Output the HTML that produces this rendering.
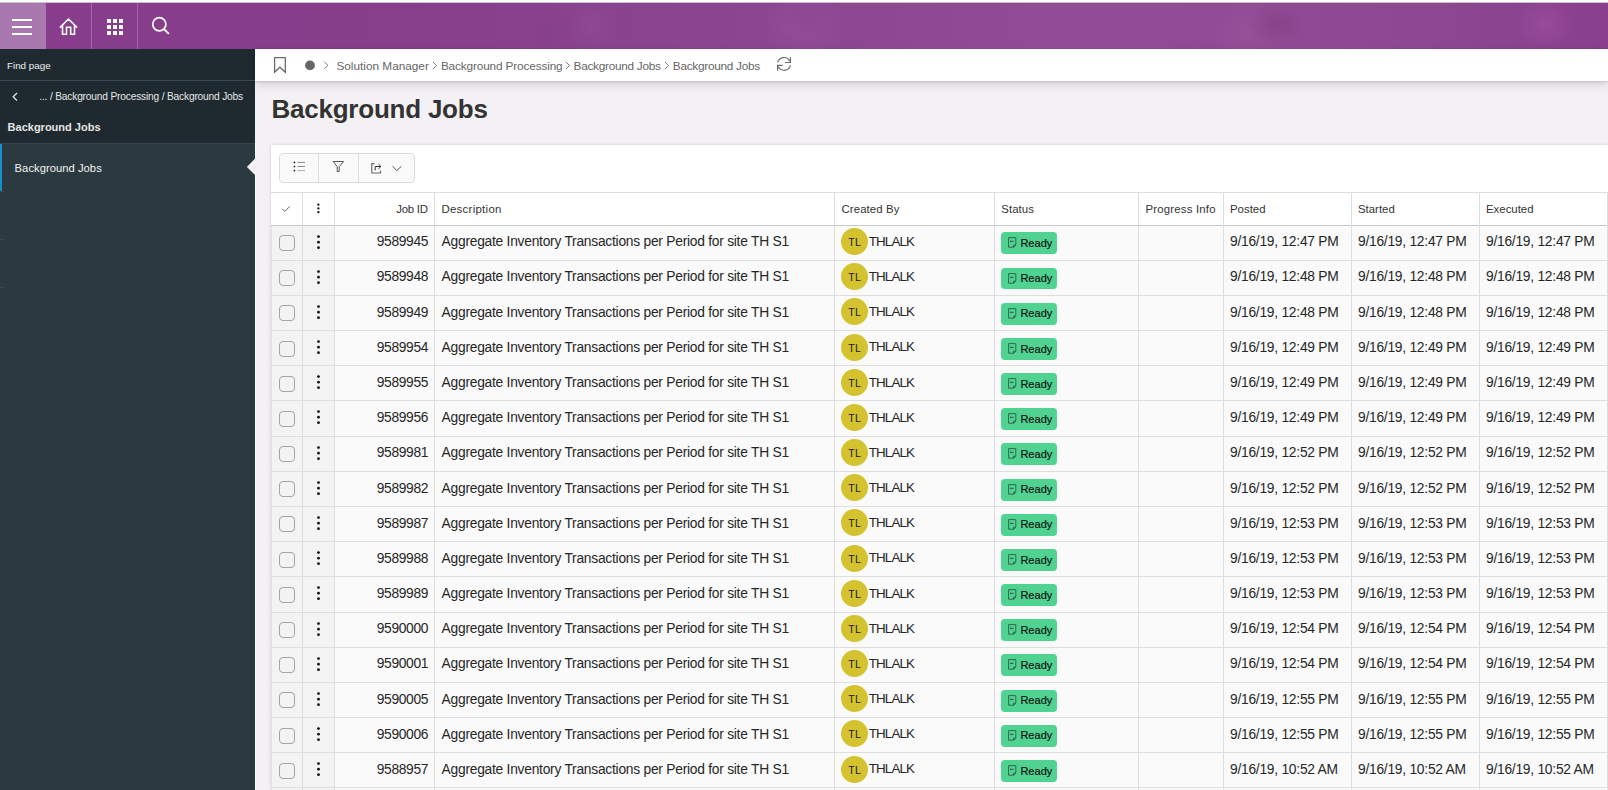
<!DOCTYPE html>
<html><head><meta charset="utf-8">
<style>
*{box-sizing:border-box;margin:0;padding:0}
html,body{width:1608px;height:790px;overflow:hidden;background:#f3f1f4;font-family:"Liberation Sans",sans-serif;color:#333}
.abs{position:absolute}
.t{position:absolute;white-space:nowrap;line-height:1}
#topstrip{left:0;top:0;width:1608px;height:3px;background:#fff;border-bottom:1px solid #c4c4c4}
#hdr{left:0;top:3px;width:1608px;height:46px;background:radial-gradient(ellipse 30px 22px at 1276px 22px,rgba(100,35,100,.22),rgba(100,35,100,0)),radial-gradient(ellipse 30px 26px at 1545px 20px,rgba(175,90,180,.35),rgba(175,90,180,0)),radial-gradient(ellipse 40px 30px at 1250px 28px,rgba(160,100,165,.25),rgba(160,100,165,0)),radial-gradient(ellipse 22px 18px at 808px 18px,rgba(110,40,115,.16),rgba(110,40,115,0)),radial-gradient(ellipse 45px 30px at 805px 22px,rgba(170,95,175,.3),rgba(170,95,175,0)),radial-gradient(ellipse 25px 25px at 592px 22px,rgba(160,95,165,.25),rgba(160,95,165,0)),radial-gradient(ellipse 22px 22px at 547px 28px,rgba(110,45,115,.1),rgba(110,45,115,0)),linear-gradient(90deg,#873d8b 0px,#873e8b 400px,#8b4590 700px,#8d4791 850px,#914c95 1050px,#904b94 1250px,#8c4790 1450px,#893f8e 1608px)}
#hdr .hb{left:0;top:0;width:46px;height:46px;background:#a878ae}
#hdr .dv{top:0;width:1px;height:46px;background:#a36aa8}
#side{left:0;top:49px;width:255px;height:741px;background:#2b3940}
#side .top{left:0;top:0;width:255px;height:94px;background:#1f2a30}
#side .ln{left:0;top:31px;width:255px;height:1px;background:#3b4b53}
#side .act{left:0;top:95px;width:2px;height:47px;background:#1b8cc9}
#bc{left:255px;top:49px;width:1353px;height:32px;background:#fff;box-shadow:0 1px 2px rgba(0,0,0,.12),0 4px 9px rgba(0,0,0,.13)}
#card{left:271px;top:145px;width:1337px;height:645px;background:#fff;box-shadow:0 0 3px rgba(0,0,0,.15)}
#tb{left:279px;top:153px;width:136px;height:30px;border:1px solid #dcdcdc;border-radius:4px;background:#fafafa}
#tb .d{top:0;width:1px;height:28px;background:#dcdcdc}
.row{left:271px;width:1337px;height:35.17px}
.hl{left:271px;width:1337px;height:1px;background:#dedede}
.hrow{left:271px;width:1337px;background:#fff;border-top:1px solid #dedede;border-bottom:1px solid #c9c9c9}
.vl{width:1px;background:#dedede}
.c01{position:absolute;left:0;top:0;width:63.5px;height:100%;background:#f3f3f3}
.cb{position:absolute;left:8px;top:9.5px;width:16px;height:16px;border:1px solid #a4a4a4;border-radius:4px;background:transparent}
.dots{position:absolute;left:43.9px;top:8px}
.dots i,.hdots i{position:absolute;left:0;width:3.3px;height:3.3px;border-radius:50%;background:#111}
.hdots{left:317.3px;top:203.5px}
.hdots i{width:2.3px;height:2.3px}
.av{position:absolute;left:570px;top:2.4px;width:27px;height:27px;border-radius:50%;background:#d4c22e;color:#1a1a1a;font-size:10.6px;text-align:center;line-height:29px;letter-spacing:0.3px;text-indent:0.3px}
.bad{position:absolute;left:730.1px;top:6.8px;width:56px;height:21.9px;border-radius:4px;background:#50d291}
.bad .bi{position:absolute;left:6.6px;top:5px}
</style></head><body>
<div id="topstrip" class="abs"></div>
<div id="hdr" class="abs">
  <div class="abs hb"></div>
  <div class="abs dv" style="left:91px"></div>
  <div class="abs dv" style="left:137px"></div>
  <svg class="abs" style="left:0;top:0" width="200" height="46" viewBox="0 0 200 46">
    <rect x="12" y="16" width="20" height="2" fill="#fff"/>
    <rect x="12" y="23" width="20" height="2" fill="#fff"/>
    <rect x="12" y="30" width="20" height="2" fill="#fff"/>
    <path d="M59.9 24.6L68.5 16L77.1 24.6M62.5 22.3V31.2H66.5V24.2H70.7V31.2H74.5V22.3" fill="none" stroke="#fff" stroke-width="1.55" stroke-linejoin="miter"/>
    <g fill="#fff">
      <rect x="107" y="16" width="4" height="4"/><rect x="113" y="16" width="4" height="4"/><rect x="119" y="16" width="4" height="4"/>
      <rect x="107" y="22" width="4" height="4"/><rect x="113" y="22" width="4" height="4"/><rect x="119" y="22" width="4" height="4"/>
      <rect x="107" y="28" width="4" height="4"/><rect x="113" y="28" width="4" height="4"/><rect x="119" y="28" width="4" height="4"/>
    </g>
    <circle cx="159.3" cy="21.3" r="6.6" fill="none" stroke="#fff" stroke-width="1.7"/>
    <path d="M164 26l4.8 4.8" stroke="#fff" stroke-width="1.8"/>
  </svg>
</div>
<div id="side" class="abs">
  <div class="abs top"></div>
  <div class="abs ln"></div>
  <div class="abs" style="left:0;top:94px;width:255px;height:1px;background:#35454d"></div>
  <div class="abs act"></div>
  <div class="abs" style="left:0;top:142px;width:5px;height:1px;background:#3a4850"></div>
  <div class="abs" style="left:0;top:190px;width:5px;height:1px;background:#3a4850"></div>
  <div class="abs" style="left:0;top:238px;width:5px;height:1px;background:#3a4850"></div>
  <div class="abs" style="left:255px;top:94px;width:1px;height:700px;background:#fdfcfd"></div>
  <svg class="abs" style="left:245px;top:105px" width="12" height="22" viewBox="245 154 12 22"><path d="M257 157.5V176.5H255.6V175L247.1 167L255.6 158.6V157.5Z" fill="#f3f1f4"/><path d="M255.6 158.6L247.6 167L255.6 175" fill="none" stroke="#fff" stroke-width="0.9"/></svg>
  <svg class="abs" style="left:11px;top:43px" width="8" height="10" viewBox="0 0 8 10"><path d="M6 1L2.2 4.8 6 8.6" fill="none" stroke="#e8e8e8" stroke-width="1.3"/></svg>
</div>
<div id="bc" class="abs">
  <svg class="abs" style="left:0;top:0" width="540" height="32" viewBox="0 0 540 32">
    <path d="M19.6 8.6H30.3V23.2L24.9 18.2L19.6 23.2Z" fill="none" stroke="#6b6b6b" stroke-width="1.3"/>
    <circle cx="55" cy="16.4" r="4.9" fill="#666"/>
    <path d="M69.3 12.9l3.6 3.5-3.6 3.5" fill="none" stroke="#777" stroke-width="1"/>
    <path d="M522.6 13.4A6.5 6.5 0 0 1 534.8 12.3" fill="none" stroke="#6b6b6b" stroke-width="1.2"/>
    <path d="M535.4 8.3V13.5H530.1" fill="none" stroke="#6b6b6b" stroke-width="1.2"/>
    <path d="M535.4 16.3A6.5 6.5 0 0 1 523.2 17.5" fill="none" stroke="#6b6b6b" stroke-width="1.2"/>
    <path d="M522.6 21.7V16.3H527.7" fill="none" stroke="#6b6b6b" stroke-width="1.2"/>
  </svg>
</div>
<div id="card" class="abs"></div>
<div id="tb" class="abs">
  <div class="abs d" style="left:38px"></div>
  <div class="abs d" style="left:78px"></div>
  <svg class="abs" style="left:-1px;top:-1px" width="136" height="30" viewBox="279 153 136 30">
    <g fill="#111"><circle cx="294.4" cy="162.4" r="0.85"/><circle cx="294.4" cy="166.5" r="0.85"/><circle cx="294.4" cy="170.6" r="0.85"/></g>
    <g stroke="#888" stroke-width="1"><path d="M297.6 162.4H305"/><path d="M297.6 166.5H305"/><path d="M297.6 170.6H305" stroke="#aaa"/></g>
    <path d="M333.2 161.5H343.6L339.2 166.6V171.4L337.2 171.6V166.6Z" fill="none" stroke="#555" stroke-width="1" stroke-linejoin="round"/>
    <path d="M374.4 163.6H371.8V173H380.5V170.4" fill="none" stroke="#666" stroke-width="1.1"/>
    <path d="M375.2 170.4V166.5H380.8M378.4 164.1L380.9 166.5L378.4 168.9" fill="none" stroke="#333" stroke-width="1"/>
    <path d="M392.5 166.3L396.9 170.6L401.3 166.3" fill="none" stroke="#555" stroke-width="1"/>
  </svg>
</div>
<div class="t" style="left:7.00px;top:60.80px;font-size:9.8px;color:#f0f0f0">Find page</div>
<div class="t" style="left:39.30px;top:92.07px;font-size:10.2px;color:#e6e6e6;letter-spacing:-0.18px">... / Background Processing / Background Jobs</div>
<div class="t" style="left:7.60px;top:122.29px;font-size:11px;color:#e6e6e6;font-weight:700">Background Jobs</div>
<div class="t" style="left:14.60px;top:162.92px;font-size:11.2px;color:#f4f4f4;letter-spacing:0.05px">Background Jobs</div>
<div class="t" style="left:336.40px;top:60.81px;font-size:11.8px;color:#666">Solution Manager</div>
<div class="t" style="left:440.90px;top:60.81px;font-size:11.8px;color:#666;letter-spacing:-0.14px">Background Processing</div>
<div class="t" style="left:573.60px;top:60.81px;font-size:11.8px;color:#666;letter-spacing:-0.27px">Background Jobs</div>
<div class="t" style="left:672.80px;top:60.81px;font-size:11.8px;color:#666;letter-spacing:-0.27px">Background Jobs</div>
<svg class="abs" style="left:431.8px;top:61px" width="6" height="9" viewBox="0 0 6 9"><path d="M1 1l3.6 3.5L1 8" fill="none" stroke="#777" stroke-width="1"/></svg>
<svg class="abs" style="left:565.0px;top:61px" width="6" height="9" viewBox="0 0 6 9"><path d="M1 1l3.6 3.5L1 8" fill="none" stroke="#777" stroke-width="1"/></svg>
<svg class="abs" style="left:663.8px;top:61px" width="6" height="9" viewBox="0 0 6 9"><path d="M1 1l3.6 3.5L1 8" fill="none" stroke="#777" stroke-width="1"/></svg>
<div class="t" style="left:271.40px;top:95.79px;font-size:26px;color:#333;font-weight:700;letter-spacing:-0.22px">Background Jobs</div>
<div class="abs hrow" style="top:192px;height:34px"></div>
<div class="t" style="right:1180.40px;top:204.25px;font-size:11.4px;color:#333;letter-spacing:-0.25px">Job ID</div>
<div class="t" style="left:441.40px;top:204.25px;font-size:11.4px;color:#333;letter-spacing:0.3px">Description</div>
<div class="t" style="left:841.50px;top:204.25px;font-size:11.4px;color:#333;letter-spacing:0.1px">Created By</div>
<div class="t" style="left:1001.20px;top:204.25px;font-size:11.4px;color:#333;letter-spacing:0.1px">Status</div>
<div class="t" style="left:1145.40px;top:204.25px;font-size:11.4px;color:#333;letter-spacing:0.2px">Progress Info</div>
<div class="t" style="left:1230.00px;top:204.25px;font-size:11.4px;color:#333">Posted</div>
<div class="t" style="left:1358.00px;top:204.25px;font-size:11.4px;color:#333">Started</div>
<div class="t" style="left:1486.00px;top:204.25px;font-size:11.4px;color:#333">Executed</div>
<svg class="abs" style="left:281px;top:205px" width="10" height="8" viewBox="0 0 10 8"><path d="M1.3 3.9l2.5 2.5 5-5" fill="none" stroke="#666" stroke-width="1"/></svg>
<svg class="abs" style="left:315px;top:202px" width="7" height="13" viewBox="315 202 7 13"><g fill="#111"><circle cx="318.4" cy="204.7" r="1.15"/><circle cx="318.4" cy="208.45" r="1.15"/><circle cx="318.4" cy="212.2" r="1.15"/></g></svg>
<div class="abs" style="left:271px;top:226px;width:1337px;height:564px;background:#fafafa"></div>
<div class="abs" style="left:271px;top:226px;width:63.5px;height:564px;background:#f3f3f3"></div>
<div class="abs" style="left:271px;top:226px;width:1px;height:564px;background:#e2e2e2"></div>
<div class="abs hl" style="top:259.80px"></div>
<div class="abs hl" style="top:294.97px"></div>
<div class="abs hl" style="top:330.14px"></div>
<div class="abs hl" style="top:365.31px"></div>
<div class="abs hl" style="top:400.48px"></div>
<div class="abs hl" style="top:435.65px"></div>
<div class="abs hl" style="top:470.82px"></div>
<div class="abs hl" style="top:505.99px"></div>
<div class="abs hl" style="top:541.16px"></div>
<div class="abs hl" style="top:576.33px"></div>
<div class="abs hl" style="top:611.50px"></div>
<div class="abs hl" style="top:646.67px"></div>
<div class="abs hl" style="top:681.84px"></div>
<div class="abs hl" style="top:717.01px"></div>
<div class="abs hl" style="top:752.18px"></div>
<div class="abs hl" style="top:787.35px"></div>
<div class="abs row" style="top:225.63px"><div class="cb"></div><svg class="dots" width="7" height="18" viewBox="0 0 7 18"><g fill="#111"><circle cx="3.5" cy="2.6" r="1.4"/><circle cx="3.5" cy="8.15" r="1.4"/><circle cx="3.5" cy="13.7" r="1.4"/></g></svg><div class="t" style="right:1179.80px;top:9.69px;font-size:13.8px;color:#262626;letter-spacing:-0.31px">9589945</div><div class="t" style="left:170.60px;top:9.69px;font-size:13.8px;color:#262626;letter-spacing:-0.25px">Aggregate Inventory Transactions per Period for site TH S1</div><div class="av">TL</div><div class="t" style="left:597.70px;top:9.23px;font-size:13.4px;color:#262626;letter-spacing:-0.85px">THLALK</div><div class="bad"><svg class="bi" width="9" height="11" viewBox="0 0 9 11"><path d="M.6 .6h7.2v7.6l-2 2H.6z" fill="none" stroke="#2d6a52" stroke-width="1"/><path d="M2 4.4h3.4" stroke="#2f6650" stroke-width="1.3"/><path d="M5.5 10.2v-2h2.3" fill="none" stroke="#2f6650" stroke-width="1"/></svg><div class="t" style="left:19.3px;top:5.69px;font-size:11px;color:#141414;letter-spacing:0.02px;-webkit-text-stroke:0.2px #141414">Ready</div></div><div class="t" style="left:959.00px;top:9.69px;font-size:13.8px;color:#262626;letter-spacing:-0.25px">9/16/19, 12:47 PM</div><div class="t" style="left:1087.00px;top:9.69px;font-size:13.8px;color:#262626;letter-spacing:-0.25px">9/16/19, 12:47 PM</div><div class="t" style="left:1215.00px;top:9.69px;font-size:13.8px;color:#262626;letter-spacing:-0.25px">9/16/19, 12:47 PM</div></div>
<div class="abs row" style="top:260.80px"><div class="cb"></div><svg class="dots" width="7" height="18" viewBox="0 0 7 18"><g fill="#111"><circle cx="3.5" cy="2.6" r="1.4"/><circle cx="3.5" cy="8.15" r="1.4"/><circle cx="3.5" cy="13.7" r="1.4"/></g></svg><div class="t" style="right:1179.80px;top:9.69px;font-size:13.8px;color:#262626;letter-spacing:-0.31px">9589948</div><div class="t" style="left:170.60px;top:9.69px;font-size:13.8px;color:#262626;letter-spacing:-0.25px">Aggregate Inventory Transactions per Period for site TH S1</div><div class="av">TL</div><div class="t" style="left:597.70px;top:9.23px;font-size:13.4px;color:#262626;letter-spacing:-0.85px">THLALK</div><div class="bad"><svg class="bi" width="9" height="11" viewBox="0 0 9 11"><path d="M.6 .6h7.2v7.6l-2 2H.6z" fill="none" stroke="#2d6a52" stroke-width="1"/><path d="M2 4.4h3.4" stroke="#2f6650" stroke-width="1.3"/><path d="M5.5 10.2v-2h2.3" fill="none" stroke="#2f6650" stroke-width="1"/></svg><div class="t" style="left:19.3px;top:5.69px;font-size:11px;color:#141414;letter-spacing:0.02px;-webkit-text-stroke:0.2px #141414">Ready</div></div><div class="t" style="left:959.00px;top:9.69px;font-size:13.8px;color:#262626;letter-spacing:-0.25px">9/16/19, 12:48 PM</div><div class="t" style="left:1087.00px;top:9.69px;font-size:13.8px;color:#262626;letter-spacing:-0.25px">9/16/19, 12:48 PM</div><div class="t" style="left:1215.00px;top:9.69px;font-size:13.8px;color:#262626;letter-spacing:-0.25px">9/16/19, 12:48 PM</div></div>
<div class="abs row" style="top:295.97px"><div class="cb"></div><svg class="dots" width="7" height="18" viewBox="0 0 7 18"><g fill="#111"><circle cx="3.5" cy="2.6" r="1.4"/><circle cx="3.5" cy="8.15" r="1.4"/><circle cx="3.5" cy="13.7" r="1.4"/></g></svg><div class="t" style="right:1179.80px;top:9.69px;font-size:13.8px;color:#262626;letter-spacing:-0.31px">9589949</div><div class="t" style="left:170.60px;top:9.69px;font-size:13.8px;color:#262626;letter-spacing:-0.25px">Aggregate Inventory Transactions per Period for site TH S1</div><div class="av">TL</div><div class="t" style="left:597.70px;top:9.23px;font-size:13.4px;color:#262626;letter-spacing:-0.85px">THLALK</div><div class="bad"><svg class="bi" width="9" height="11" viewBox="0 0 9 11"><path d="M.6 .6h7.2v7.6l-2 2H.6z" fill="none" stroke="#2d6a52" stroke-width="1"/><path d="M2 4.4h3.4" stroke="#2f6650" stroke-width="1.3"/><path d="M5.5 10.2v-2h2.3" fill="none" stroke="#2f6650" stroke-width="1"/></svg><div class="t" style="left:19.3px;top:5.69px;font-size:11px;color:#141414;letter-spacing:0.02px;-webkit-text-stroke:0.2px #141414">Ready</div></div><div class="t" style="left:959.00px;top:9.69px;font-size:13.8px;color:#262626;letter-spacing:-0.25px">9/16/19, 12:48 PM</div><div class="t" style="left:1087.00px;top:9.69px;font-size:13.8px;color:#262626;letter-spacing:-0.25px">9/16/19, 12:48 PM</div><div class="t" style="left:1215.00px;top:9.69px;font-size:13.8px;color:#262626;letter-spacing:-0.25px">9/16/19, 12:48 PM</div></div>
<div class="abs row" style="top:331.14px"><div class="cb"></div><svg class="dots" width="7" height="18" viewBox="0 0 7 18"><g fill="#111"><circle cx="3.5" cy="2.6" r="1.4"/><circle cx="3.5" cy="8.15" r="1.4"/><circle cx="3.5" cy="13.7" r="1.4"/></g></svg><div class="t" style="right:1179.80px;top:9.69px;font-size:13.8px;color:#262626;letter-spacing:-0.31px">9589954</div><div class="t" style="left:170.60px;top:9.69px;font-size:13.8px;color:#262626;letter-spacing:-0.25px">Aggregate Inventory Transactions per Period for site TH S1</div><div class="av">TL</div><div class="t" style="left:597.70px;top:9.23px;font-size:13.4px;color:#262626;letter-spacing:-0.85px">THLALK</div><div class="bad"><svg class="bi" width="9" height="11" viewBox="0 0 9 11"><path d="M.6 .6h7.2v7.6l-2 2H.6z" fill="none" stroke="#2d6a52" stroke-width="1"/><path d="M2 4.4h3.4" stroke="#2f6650" stroke-width="1.3"/><path d="M5.5 10.2v-2h2.3" fill="none" stroke="#2f6650" stroke-width="1"/></svg><div class="t" style="left:19.3px;top:5.69px;font-size:11px;color:#141414;letter-spacing:0.02px;-webkit-text-stroke:0.2px #141414">Ready</div></div><div class="t" style="left:959.00px;top:9.69px;font-size:13.8px;color:#262626;letter-spacing:-0.25px">9/16/19, 12:49 PM</div><div class="t" style="left:1087.00px;top:9.69px;font-size:13.8px;color:#262626;letter-spacing:-0.25px">9/16/19, 12:49 PM</div><div class="t" style="left:1215.00px;top:9.69px;font-size:13.8px;color:#262626;letter-spacing:-0.25px">9/16/19, 12:49 PM</div></div>
<div class="abs row" style="top:366.31px"><div class="cb"></div><svg class="dots" width="7" height="18" viewBox="0 0 7 18"><g fill="#111"><circle cx="3.5" cy="2.6" r="1.4"/><circle cx="3.5" cy="8.15" r="1.4"/><circle cx="3.5" cy="13.7" r="1.4"/></g></svg><div class="t" style="right:1179.80px;top:9.69px;font-size:13.8px;color:#262626;letter-spacing:-0.31px">9589955</div><div class="t" style="left:170.60px;top:9.69px;font-size:13.8px;color:#262626;letter-spacing:-0.25px">Aggregate Inventory Transactions per Period for site TH S1</div><div class="av">TL</div><div class="t" style="left:597.70px;top:9.23px;font-size:13.4px;color:#262626;letter-spacing:-0.85px">THLALK</div><div class="bad"><svg class="bi" width="9" height="11" viewBox="0 0 9 11"><path d="M.6 .6h7.2v7.6l-2 2H.6z" fill="none" stroke="#2d6a52" stroke-width="1"/><path d="M2 4.4h3.4" stroke="#2f6650" stroke-width="1.3"/><path d="M5.5 10.2v-2h2.3" fill="none" stroke="#2f6650" stroke-width="1"/></svg><div class="t" style="left:19.3px;top:5.69px;font-size:11px;color:#141414;letter-spacing:0.02px;-webkit-text-stroke:0.2px #141414">Ready</div></div><div class="t" style="left:959.00px;top:9.69px;font-size:13.8px;color:#262626;letter-spacing:-0.25px">9/16/19, 12:49 PM</div><div class="t" style="left:1087.00px;top:9.69px;font-size:13.8px;color:#262626;letter-spacing:-0.25px">9/16/19, 12:49 PM</div><div class="t" style="left:1215.00px;top:9.69px;font-size:13.8px;color:#262626;letter-spacing:-0.25px">9/16/19, 12:49 PM</div></div>
<div class="abs row" style="top:401.48px"><div class="cb"></div><svg class="dots" width="7" height="18" viewBox="0 0 7 18"><g fill="#111"><circle cx="3.5" cy="2.6" r="1.4"/><circle cx="3.5" cy="8.15" r="1.4"/><circle cx="3.5" cy="13.7" r="1.4"/></g></svg><div class="t" style="right:1179.80px;top:9.69px;font-size:13.8px;color:#262626;letter-spacing:-0.31px">9589956</div><div class="t" style="left:170.60px;top:9.69px;font-size:13.8px;color:#262626;letter-spacing:-0.25px">Aggregate Inventory Transactions per Period for site TH S1</div><div class="av">TL</div><div class="t" style="left:597.70px;top:9.23px;font-size:13.4px;color:#262626;letter-spacing:-0.85px">THLALK</div><div class="bad"><svg class="bi" width="9" height="11" viewBox="0 0 9 11"><path d="M.6 .6h7.2v7.6l-2 2H.6z" fill="none" stroke="#2d6a52" stroke-width="1"/><path d="M2 4.4h3.4" stroke="#2f6650" stroke-width="1.3"/><path d="M5.5 10.2v-2h2.3" fill="none" stroke="#2f6650" stroke-width="1"/></svg><div class="t" style="left:19.3px;top:5.69px;font-size:11px;color:#141414;letter-spacing:0.02px;-webkit-text-stroke:0.2px #141414">Ready</div></div><div class="t" style="left:959.00px;top:9.69px;font-size:13.8px;color:#262626;letter-spacing:-0.25px">9/16/19, 12:49 PM</div><div class="t" style="left:1087.00px;top:9.69px;font-size:13.8px;color:#262626;letter-spacing:-0.25px">9/16/19, 12:49 PM</div><div class="t" style="left:1215.00px;top:9.69px;font-size:13.8px;color:#262626;letter-spacing:-0.25px">9/16/19, 12:49 PM</div></div>
<div class="abs row" style="top:436.65px"><div class="cb"></div><svg class="dots" width="7" height="18" viewBox="0 0 7 18"><g fill="#111"><circle cx="3.5" cy="2.6" r="1.4"/><circle cx="3.5" cy="8.15" r="1.4"/><circle cx="3.5" cy="13.7" r="1.4"/></g></svg><div class="t" style="right:1179.80px;top:9.69px;font-size:13.8px;color:#262626;letter-spacing:-0.31px">9589981</div><div class="t" style="left:170.60px;top:9.69px;font-size:13.8px;color:#262626;letter-spacing:-0.25px">Aggregate Inventory Transactions per Period for site TH S1</div><div class="av">TL</div><div class="t" style="left:597.70px;top:9.23px;font-size:13.4px;color:#262626;letter-spacing:-0.85px">THLALK</div><div class="bad"><svg class="bi" width="9" height="11" viewBox="0 0 9 11"><path d="M.6 .6h7.2v7.6l-2 2H.6z" fill="none" stroke="#2d6a52" stroke-width="1"/><path d="M2 4.4h3.4" stroke="#2f6650" stroke-width="1.3"/><path d="M5.5 10.2v-2h2.3" fill="none" stroke="#2f6650" stroke-width="1"/></svg><div class="t" style="left:19.3px;top:5.69px;font-size:11px;color:#141414;letter-spacing:0.02px;-webkit-text-stroke:0.2px #141414">Ready</div></div><div class="t" style="left:959.00px;top:9.69px;font-size:13.8px;color:#262626;letter-spacing:-0.25px">9/16/19, 12:52 PM</div><div class="t" style="left:1087.00px;top:9.69px;font-size:13.8px;color:#262626;letter-spacing:-0.25px">9/16/19, 12:52 PM</div><div class="t" style="left:1215.00px;top:9.69px;font-size:13.8px;color:#262626;letter-spacing:-0.25px">9/16/19, 12:52 PM</div></div>
<div class="abs row" style="top:471.82px"><div class="cb"></div><svg class="dots" width="7" height="18" viewBox="0 0 7 18"><g fill="#111"><circle cx="3.5" cy="2.6" r="1.4"/><circle cx="3.5" cy="8.15" r="1.4"/><circle cx="3.5" cy="13.7" r="1.4"/></g></svg><div class="t" style="right:1179.80px;top:9.69px;font-size:13.8px;color:#262626;letter-spacing:-0.31px">9589982</div><div class="t" style="left:170.60px;top:9.69px;font-size:13.8px;color:#262626;letter-spacing:-0.25px">Aggregate Inventory Transactions per Period for site TH S1</div><div class="av">TL</div><div class="t" style="left:597.70px;top:9.23px;font-size:13.4px;color:#262626;letter-spacing:-0.85px">THLALK</div><div class="bad"><svg class="bi" width="9" height="11" viewBox="0 0 9 11"><path d="M.6 .6h7.2v7.6l-2 2H.6z" fill="none" stroke="#2d6a52" stroke-width="1"/><path d="M2 4.4h3.4" stroke="#2f6650" stroke-width="1.3"/><path d="M5.5 10.2v-2h2.3" fill="none" stroke="#2f6650" stroke-width="1"/></svg><div class="t" style="left:19.3px;top:5.69px;font-size:11px;color:#141414;letter-spacing:0.02px;-webkit-text-stroke:0.2px #141414">Ready</div></div><div class="t" style="left:959.00px;top:9.69px;font-size:13.8px;color:#262626;letter-spacing:-0.25px">9/16/19, 12:52 PM</div><div class="t" style="left:1087.00px;top:9.69px;font-size:13.8px;color:#262626;letter-spacing:-0.25px">9/16/19, 12:52 PM</div><div class="t" style="left:1215.00px;top:9.69px;font-size:13.8px;color:#262626;letter-spacing:-0.25px">9/16/19, 12:52 PM</div></div>
<div class="abs row" style="top:506.99px"><div class="cb"></div><svg class="dots" width="7" height="18" viewBox="0 0 7 18"><g fill="#111"><circle cx="3.5" cy="2.6" r="1.4"/><circle cx="3.5" cy="8.15" r="1.4"/><circle cx="3.5" cy="13.7" r="1.4"/></g></svg><div class="t" style="right:1179.80px;top:9.69px;font-size:13.8px;color:#262626;letter-spacing:-0.31px">9589987</div><div class="t" style="left:170.60px;top:9.69px;font-size:13.8px;color:#262626;letter-spacing:-0.25px">Aggregate Inventory Transactions per Period for site TH S1</div><div class="av">TL</div><div class="t" style="left:597.70px;top:9.23px;font-size:13.4px;color:#262626;letter-spacing:-0.85px">THLALK</div><div class="bad"><svg class="bi" width="9" height="11" viewBox="0 0 9 11"><path d="M.6 .6h7.2v7.6l-2 2H.6z" fill="none" stroke="#2d6a52" stroke-width="1"/><path d="M2 4.4h3.4" stroke="#2f6650" stroke-width="1.3"/><path d="M5.5 10.2v-2h2.3" fill="none" stroke="#2f6650" stroke-width="1"/></svg><div class="t" style="left:19.3px;top:5.69px;font-size:11px;color:#141414;letter-spacing:0.02px;-webkit-text-stroke:0.2px #141414">Ready</div></div><div class="t" style="left:959.00px;top:9.69px;font-size:13.8px;color:#262626;letter-spacing:-0.25px">9/16/19, 12:53 PM</div><div class="t" style="left:1087.00px;top:9.69px;font-size:13.8px;color:#262626;letter-spacing:-0.25px">9/16/19, 12:53 PM</div><div class="t" style="left:1215.00px;top:9.69px;font-size:13.8px;color:#262626;letter-spacing:-0.25px">9/16/19, 12:53 PM</div></div>
<div class="abs row" style="top:542.16px"><div class="cb"></div><svg class="dots" width="7" height="18" viewBox="0 0 7 18"><g fill="#111"><circle cx="3.5" cy="2.6" r="1.4"/><circle cx="3.5" cy="8.15" r="1.4"/><circle cx="3.5" cy="13.7" r="1.4"/></g></svg><div class="t" style="right:1179.80px;top:9.69px;font-size:13.8px;color:#262626;letter-spacing:-0.31px">9589988</div><div class="t" style="left:170.60px;top:9.69px;font-size:13.8px;color:#262626;letter-spacing:-0.25px">Aggregate Inventory Transactions per Period for site TH S1</div><div class="av">TL</div><div class="t" style="left:597.70px;top:9.23px;font-size:13.4px;color:#262626;letter-spacing:-0.85px">THLALK</div><div class="bad"><svg class="bi" width="9" height="11" viewBox="0 0 9 11"><path d="M.6 .6h7.2v7.6l-2 2H.6z" fill="none" stroke="#2d6a52" stroke-width="1"/><path d="M2 4.4h3.4" stroke="#2f6650" stroke-width="1.3"/><path d="M5.5 10.2v-2h2.3" fill="none" stroke="#2f6650" stroke-width="1"/></svg><div class="t" style="left:19.3px;top:5.69px;font-size:11px;color:#141414;letter-spacing:0.02px;-webkit-text-stroke:0.2px #141414">Ready</div></div><div class="t" style="left:959.00px;top:9.69px;font-size:13.8px;color:#262626;letter-spacing:-0.25px">9/16/19, 12:53 PM</div><div class="t" style="left:1087.00px;top:9.69px;font-size:13.8px;color:#262626;letter-spacing:-0.25px">9/16/19, 12:53 PM</div><div class="t" style="left:1215.00px;top:9.69px;font-size:13.8px;color:#262626;letter-spacing:-0.25px">9/16/19, 12:53 PM</div></div>
<div class="abs row" style="top:577.33px"><div class="cb"></div><svg class="dots" width="7" height="18" viewBox="0 0 7 18"><g fill="#111"><circle cx="3.5" cy="2.6" r="1.4"/><circle cx="3.5" cy="8.15" r="1.4"/><circle cx="3.5" cy="13.7" r="1.4"/></g></svg><div class="t" style="right:1179.80px;top:9.69px;font-size:13.8px;color:#262626;letter-spacing:-0.31px">9589989</div><div class="t" style="left:170.60px;top:9.69px;font-size:13.8px;color:#262626;letter-spacing:-0.25px">Aggregate Inventory Transactions per Period for site TH S1</div><div class="av">TL</div><div class="t" style="left:597.70px;top:9.23px;font-size:13.4px;color:#262626;letter-spacing:-0.85px">THLALK</div><div class="bad"><svg class="bi" width="9" height="11" viewBox="0 0 9 11"><path d="M.6 .6h7.2v7.6l-2 2H.6z" fill="none" stroke="#2d6a52" stroke-width="1"/><path d="M2 4.4h3.4" stroke="#2f6650" stroke-width="1.3"/><path d="M5.5 10.2v-2h2.3" fill="none" stroke="#2f6650" stroke-width="1"/></svg><div class="t" style="left:19.3px;top:5.69px;font-size:11px;color:#141414;letter-spacing:0.02px;-webkit-text-stroke:0.2px #141414">Ready</div></div><div class="t" style="left:959.00px;top:9.69px;font-size:13.8px;color:#262626;letter-spacing:-0.25px">9/16/19, 12:53 PM</div><div class="t" style="left:1087.00px;top:9.69px;font-size:13.8px;color:#262626;letter-spacing:-0.25px">9/16/19, 12:53 PM</div><div class="t" style="left:1215.00px;top:9.69px;font-size:13.8px;color:#262626;letter-spacing:-0.25px">9/16/19, 12:53 PM</div></div>
<div class="abs row" style="top:612.50px"><div class="cb"></div><svg class="dots" width="7" height="18" viewBox="0 0 7 18"><g fill="#111"><circle cx="3.5" cy="2.6" r="1.4"/><circle cx="3.5" cy="8.15" r="1.4"/><circle cx="3.5" cy="13.7" r="1.4"/></g></svg><div class="t" style="right:1179.80px;top:9.69px;font-size:13.8px;color:#262626;letter-spacing:-0.31px">9590000</div><div class="t" style="left:170.60px;top:9.69px;font-size:13.8px;color:#262626;letter-spacing:-0.25px">Aggregate Inventory Transactions per Period for site TH S1</div><div class="av">TL</div><div class="t" style="left:597.70px;top:9.23px;font-size:13.4px;color:#262626;letter-spacing:-0.85px">THLALK</div><div class="bad"><svg class="bi" width="9" height="11" viewBox="0 0 9 11"><path d="M.6 .6h7.2v7.6l-2 2H.6z" fill="none" stroke="#2d6a52" stroke-width="1"/><path d="M2 4.4h3.4" stroke="#2f6650" stroke-width="1.3"/><path d="M5.5 10.2v-2h2.3" fill="none" stroke="#2f6650" stroke-width="1"/></svg><div class="t" style="left:19.3px;top:5.69px;font-size:11px;color:#141414;letter-spacing:0.02px;-webkit-text-stroke:0.2px #141414">Ready</div></div><div class="t" style="left:959.00px;top:9.69px;font-size:13.8px;color:#262626;letter-spacing:-0.25px">9/16/19, 12:54 PM</div><div class="t" style="left:1087.00px;top:9.69px;font-size:13.8px;color:#262626;letter-spacing:-0.25px">9/16/19, 12:54 PM</div><div class="t" style="left:1215.00px;top:9.69px;font-size:13.8px;color:#262626;letter-spacing:-0.25px">9/16/19, 12:54 PM</div></div>
<div class="abs row" style="top:647.67px"><div class="cb"></div><svg class="dots" width="7" height="18" viewBox="0 0 7 18"><g fill="#111"><circle cx="3.5" cy="2.6" r="1.4"/><circle cx="3.5" cy="8.15" r="1.4"/><circle cx="3.5" cy="13.7" r="1.4"/></g></svg><div class="t" style="right:1179.80px;top:9.69px;font-size:13.8px;color:#262626;letter-spacing:-0.31px">9590001</div><div class="t" style="left:170.60px;top:9.69px;font-size:13.8px;color:#262626;letter-spacing:-0.25px">Aggregate Inventory Transactions per Period for site TH S1</div><div class="av">TL</div><div class="t" style="left:597.70px;top:9.23px;font-size:13.4px;color:#262626;letter-spacing:-0.85px">THLALK</div><div class="bad"><svg class="bi" width="9" height="11" viewBox="0 0 9 11"><path d="M.6 .6h7.2v7.6l-2 2H.6z" fill="none" stroke="#2d6a52" stroke-width="1"/><path d="M2 4.4h3.4" stroke="#2f6650" stroke-width="1.3"/><path d="M5.5 10.2v-2h2.3" fill="none" stroke="#2f6650" stroke-width="1"/></svg><div class="t" style="left:19.3px;top:5.69px;font-size:11px;color:#141414;letter-spacing:0.02px;-webkit-text-stroke:0.2px #141414">Ready</div></div><div class="t" style="left:959.00px;top:9.69px;font-size:13.8px;color:#262626;letter-spacing:-0.25px">9/16/19, 12:54 PM</div><div class="t" style="left:1087.00px;top:9.69px;font-size:13.8px;color:#262626;letter-spacing:-0.25px">9/16/19, 12:54 PM</div><div class="t" style="left:1215.00px;top:9.69px;font-size:13.8px;color:#262626;letter-spacing:-0.25px">9/16/19, 12:54 PM</div></div>
<div class="abs row" style="top:682.84px"><div class="cb"></div><svg class="dots" width="7" height="18" viewBox="0 0 7 18"><g fill="#111"><circle cx="3.5" cy="2.6" r="1.4"/><circle cx="3.5" cy="8.15" r="1.4"/><circle cx="3.5" cy="13.7" r="1.4"/></g></svg><div class="t" style="right:1179.80px;top:9.69px;font-size:13.8px;color:#262626;letter-spacing:-0.31px">9590005</div><div class="t" style="left:170.60px;top:9.69px;font-size:13.8px;color:#262626;letter-spacing:-0.25px">Aggregate Inventory Transactions per Period for site TH S1</div><div class="av">TL</div><div class="t" style="left:597.70px;top:9.23px;font-size:13.4px;color:#262626;letter-spacing:-0.85px">THLALK</div><div class="bad"><svg class="bi" width="9" height="11" viewBox="0 0 9 11"><path d="M.6 .6h7.2v7.6l-2 2H.6z" fill="none" stroke="#2d6a52" stroke-width="1"/><path d="M2 4.4h3.4" stroke="#2f6650" stroke-width="1.3"/><path d="M5.5 10.2v-2h2.3" fill="none" stroke="#2f6650" stroke-width="1"/></svg><div class="t" style="left:19.3px;top:5.69px;font-size:11px;color:#141414;letter-spacing:0.02px;-webkit-text-stroke:0.2px #141414">Ready</div></div><div class="t" style="left:959.00px;top:9.69px;font-size:13.8px;color:#262626;letter-spacing:-0.25px">9/16/19, 12:55 PM</div><div class="t" style="left:1087.00px;top:9.69px;font-size:13.8px;color:#262626;letter-spacing:-0.25px">9/16/19, 12:55 PM</div><div class="t" style="left:1215.00px;top:9.69px;font-size:13.8px;color:#262626;letter-spacing:-0.25px">9/16/19, 12:55 PM</div></div>
<div class="abs row" style="top:718.01px"><div class="cb"></div><svg class="dots" width="7" height="18" viewBox="0 0 7 18"><g fill="#111"><circle cx="3.5" cy="2.6" r="1.4"/><circle cx="3.5" cy="8.15" r="1.4"/><circle cx="3.5" cy="13.7" r="1.4"/></g></svg><div class="t" style="right:1179.80px;top:9.69px;font-size:13.8px;color:#262626;letter-spacing:-0.31px">9590006</div><div class="t" style="left:170.60px;top:9.69px;font-size:13.8px;color:#262626;letter-spacing:-0.25px">Aggregate Inventory Transactions per Period for site TH S1</div><div class="av">TL</div><div class="t" style="left:597.70px;top:9.23px;font-size:13.4px;color:#262626;letter-spacing:-0.85px">THLALK</div><div class="bad"><svg class="bi" width="9" height="11" viewBox="0 0 9 11"><path d="M.6 .6h7.2v7.6l-2 2H.6z" fill="none" stroke="#2d6a52" stroke-width="1"/><path d="M2 4.4h3.4" stroke="#2f6650" stroke-width="1.3"/><path d="M5.5 10.2v-2h2.3" fill="none" stroke="#2f6650" stroke-width="1"/></svg><div class="t" style="left:19.3px;top:5.69px;font-size:11px;color:#141414;letter-spacing:0.02px;-webkit-text-stroke:0.2px #141414">Ready</div></div><div class="t" style="left:959.00px;top:9.69px;font-size:13.8px;color:#262626;letter-spacing:-0.25px">9/16/19, 12:55 PM</div><div class="t" style="left:1087.00px;top:9.69px;font-size:13.8px;color:#262626;letter-spacing:-0.25px">9/16/19, 12:55 PM</div><div class="t" style="left:1215.00px;top:9.69px;font-size:13.8px;color:#262626;letter-spacing:-0.25px">9/16/19, 12:55 PM</div></div>
<div class="abs row" style="top:753.18px"><div class="cb"></div><svg class="dots" width="7" height="18" viewBox="0 0 7 18"><g fill="#111"><circle cx="3.5" cy="2.6" r="1.4"/><circle cx="3.5" cy="8.15" r="1.4"/><circle cx="3.5" cy="13.7" r="1.4"/></g></svg><div class="t" style="right:1179.80px;top:9.69px;font-size:13.8px;color:#262626;letter-spacing:-0.31px">9588957</div><div class="t" style="left:170.60px;top:9.69px;font-size:13.8px;color:#262626;letter-spacing:-0.25px">Aggregate Inventory Transactions per Period for site TH S1</div><div class="av">TL</div><div class="t" style="left:597.70px;top:9.23px;font-size:13.4px;color:#262626;letter-spacing:-0.85px">THLALK</div><div class="bad"><svg class="bi" width="9" height="11" viewBox="0 0 9 11"><path d="M.6 .6h7.2v7.6l-2 2H.6z" fill="none" stroke="#2d6a52" stroke-width="1"/><path d="M2 4.4h3.4" stroke="#2f6650" stroke-width="1.3"/><path d="M5.5 10.2v-2h2.3" fill="none" stroke="#2f6650" stroke-width="1"/></svg><div class="t" style="left:19.3px;top:5.69px;font-size:11px;color:#141414;letter-spacing:0.02px;-webkit-text-stroke:0.2px #141414">Ready</div></div><div class="t" style="left:959.00px;top:9.69px;font-size:13.8px;color:#262626;letter-spacing:-0.25px">9/16/19, 10:52 AM</div><div class="t" style="left:1087.00px;top:9.69px;font-size:13.8px;color:#262626;letter-spacing:-0.25px">9/16/19, 10:52 AM</div><div class="t" style="left:1215.00px;top:9.69px;font-size:13.8px;color:#262626;letter-spacing:-0.25px">9/16/19, 10:52 AM</div></div>
<div class="abs vl" style="left:302.0px;top:192px;height:598px"></div>
<div class="abs vl" style="left:334.0px;top:192px;height:598px"></div>
<div class="abs vl" style="left:434.0px;top:192px;height:598px"></div>
<div class="abs vl" style="left:834.0px;top:192px;height:598px"></div>
<div class="abs vl" style="left:994.0px;top:192px;height:598px"></div>
<div class="abs vl" style="left:1138.0px;top:192px;height:598px"></div>
<div class="abs vl" style="left:1223.0px;top:192px;height:598px"></div>
<div class="abs vl" style="left:1351.0px;top:192px;height:598px"></div>
<div class="abs vl" style="left:1479.0px;top:192px;height:598px"></div>
<div class="abs vl" style="left:1606.5px;top:192px;height:598px"></div>
</body></html>
